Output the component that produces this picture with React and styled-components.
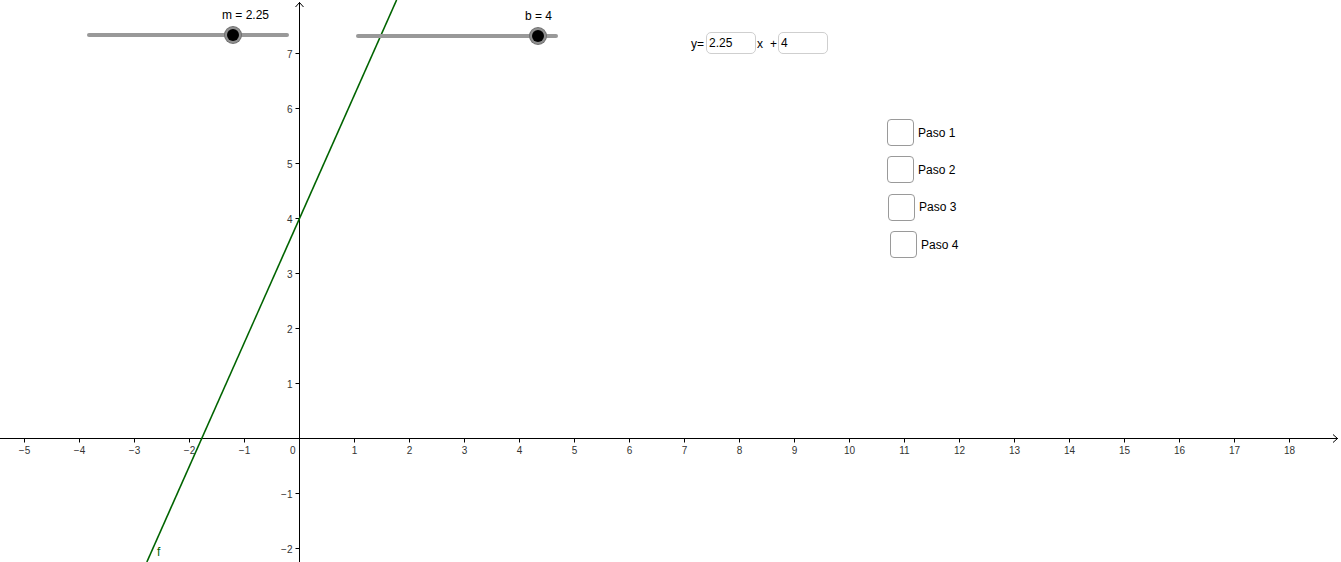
import React from 'react'
import styled, { createGlobalStyle } from 'styled-components'

const GlobalStyle = createGlobalStyle`
  html, body {
    margin: 0;
    padding: 0;
    background: #fff;
  }
  body {
    font-family: "Liberation Sans", Arial, sans-serif;
  }
`

const W = 1341
const H = 562
const OX = 299.5
const OY = 438.5
const UNIT = 55

const px = u => OX + UNIT * u
const py = v => OY - UNIT * v

const Canvas = styled.div`
  position: relative;
  width: ${W}px;
  height: ${H}px;
  overflow: hidden;
  background: #fff;
  font-family: "Liberation Sans", Arial, sans-serif;
  color: #000;
`

const Graph = styled.svg`
  position: absolute;
  left: 0;
  top: 0;
  display: block;
`

const SliderBox = styled.div`
  position: absolute;
  left: ${p => p.x}px;
  top: ${p => p.y}px;
  width: ${p => p.length}px;
  height: 4px;
`

const Track = styled.div`
  width: 100%;
  height: 4px;
  border-radius: 2px;
  background: #999;
`

const Knob = styled.div`
  position: absolute;
  top: 2px;
  width: 12px;
  height: 12px;
  margin: -6px 0 0 -6px;
  border-radius: 50%;
  background: #000;
  box-shadow: 0 0 0 2px #8f8f8f, 0 0 0 3px #6f6f6f;
`

const SliderLabel = styled.div`
  position: absolute;
  left: ${p => p.x}px;
  top: ${p => p.y}px;
  font-size: 12px;
  white-space: nowrap;
`

const Equation = styled.div`
  position: absolute;
  left: 691px;
  top: 32px;
  display: flex;
  align-items: center;
  font-size: 12px;
`

const Field = styled.div`
  box-sizing: border-box;
  width: 50px;
  height: 22px;
  border: 1px solid #cfcfcf;
  border-radius: 5px;
  padding: 0 2px;
  display: flex;
  align-items: center;
  font-size: 12px;
  margin-left: ${p => p.gap || 0}px;
`

const Word = styled.span`
  margin-left: ${p => p.gap || 0}px;
  padding-top: 2px;
`

const Steps = styled.div`
  position: absolute;
  left: 887px;
  top: 119px;
  display: flex;
  flex-direction: column;
  gap: 10.4px;
`

const Step = styled.label`
  display: flex;
  align-items: center;
  gap: 4px;
  margin-left: ${p => p.shift}px;
  font-size: 12px;
`

const Box = styled.span`
  box-sizing: border-box;
  width: 27px;
  height: 27px;
  border: 1.5px solid #9a9a9a;
  border-radius: 4px;
  background: #fff;
`

const Slider = ({ x, y, length, min, max, value }) => (
  <SliderBox x={x} y={y} length={length}>
    <Track />
    <Knob style={{ left: ((value - min) / (max - min)) * length }} />
  </SliderBox>
)

const Axes = () => {
  const xs = []
  for (let k = -5; k <= 18; k++) if (k !== 0) xs.push(k)
  const ys = []
  for (let k = -2; k <= 7; k++) if (k !== 0) ys.push(k)
  const m = 2.25
  const b = 4
  const vTop = OY / UNIT
  const vBot = (OY - H) / UNIT
  const lineTop = [px((vTop - b) / m), 0]
  const lineBot = [px((vBot - b) / m), H]
  const fmt = k => (k < 0 ? '\u2212' + Math.abs(k) : String(k))
  return (
    <Graph width={W} height={H} viewBox={`0 0 ${W} ${H}`}>
      <g stroke="#000" strokeWidth="1" fill="none">
        <line x1="0" y1={OY} x2={W - 3} y2={OY} />
        <line x1={OX} y1={H} x2={OX} y2="2" />
        <polyline points={`${W - 8},${OY - 4} ${W - 3.5},${OY} ${W - 8},${OY + 4}`} />
        <polyline points={`${OX - 4},7 ${OX},2.5 ${OX + 4},7`} />
        {xs.map(k => (
          <line key={'tx' + k} x1={px(k)} y1={OY} x2={px(k)} y2={OY + 4} />
        ))}
        {ys.map(k => (
          <line key={'ty' + k} x1={OX - 4} y1={py(k)} x2={OX} y2={py(k)} />
        ))}
      </g>
      <g fill="#333" fontSize="10" fontFamily='"Liberation Sans", Arial, sans-serif'>
        {xs.map(k => (
          <text key={'lx' + k} x={px(k)} y={OY + 15} textAnchor="middle">
            {fmt(k)}
          </text>
        ))}
        <text x={OX - 4} y={OY + 15} textAnchor="end">0</text>
        {ys.map(k => (
          <text key={'ly' + k} x={OX - 7} y={py(k) + 4} textAnchor="end">
            {fmt(k)}
          </text>
        ))}
      </g>
      <line
        x1={lineTop[0]}
        y1={lineTop[1]}
        x2={lineBot[0]}
        y2={lineBot[1]}
        stroke="#006400"
        strokeWidth="1.6"
      />
      <text x="157" y="556" fill="#006400" fontSize="12" fontFamily='"Liberation Sans", Arial, sans-serif'>
        f
      </text>
    </Graph>
  )
}

const steps = [
  { label: 'Paso 1', shift: 0 },
  { label: 'Paso 2', shift: 0 },
  { label: 'Paso 3', shift: 1 },
  { label: 'Paso 4', shift: 3 }
]

const App = () => (
  <Canvas>
    <GlobalStyle />
    <Axes />

    <Slider x={87} y={33} length={202} min={-5} max={5} value={2.25} />
    <SliderLabel x={222} y={8}>m = 2.25</SliderLabel>

    <Slider x={356} y={34} length={202} min={-5} max={5} value={4} />
    <SliderLabel x={525} y={9}>b = 4</SliderLabel>

    <Equation>
      <Word>y=</Word>
      <Field gap={2}>2.25</Field>
      <Word gap={1}>x</Word>
      <Word gap={7}>+</Word>
      <Field gap={1}>4</Field>
    </Equation>

    <Steps>
      {steps.map(s => (
        <Step key={s.label} shift={s.shift}>
          <Box />
          {s.label}
        </Step>
      ))}
    </Steps>
  </Canvas>
)

export default App
